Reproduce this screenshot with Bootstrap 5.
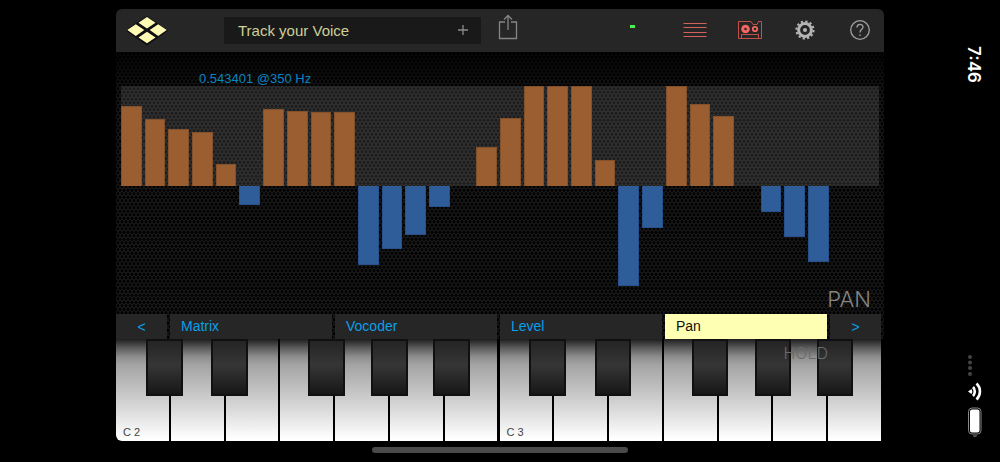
<!DOCTYPE html>
<html lang="en">
<head>
<meta charset="utf-8">
<meta name="viewport" content="width=device-width, initial-scale=1">
<title>Track your Voice</title>
<link href="https://cdn.jsdelivr.net/npm/bootstrap@5.3.0/dist/css/bootstrap.min.css" rel="stylesheet">
<style>
  body { background: #000; font-family: "Liberation Sans", Arial, sans-serif; font-size: 14px; }
  button { background: none; border: 0; padding: 0; }
  svg { display: block; }
  main { padding: 9px 0; }
  .side { flex: 0 0 116px; }

  .top-bar { background: #262626; height: 43px; padding: 0 12px 0 10px; border-radius: 6px 6px 0 0; }
  .preset { flex: 0 1 257px; height: 27px; margin-left: 55px; background: #191919; }
  .preset input { background: none; border: 0; outline: 0; width: 100%; min-width: 0; padding: 1px 0 0 14px; color: #cfcf98; font-size: 15px; }
  .preset button { padding: 0 12px; }
  .share { margin: 0 0 7px 17px; }
  .led { width: 5px; height: 3px; background: #4cf04c; margin: 0 48px 8px auto; }
  .tools { gap: 31px; margin-bottom: 2px; }
  .tools button { width: 24px; }
  .tools svg { margin: 0 auto; }

  .chart { height: 262px; padding: 16px 5px 0; }
  .readout { color: #0b84c4; font-size: 13px; line-height: 22px; height: 18px; padding-left: 78px; }
  .bars { display: grid; grid-template-columns: repeat(32, 1fr); height: 200px; background: linear-gradient(rgba(255,255,255,.11) 50%, transparent 50%); }
  .band { display: grid; grid-template-rows: 100px 100px; padding-right: 3px; }
  .band-up { align-self: end; background: #9a5e30; border: solid #82502a; border-width: 1px 1px 0; }
  .band-down { grid-row: 2; background: #2f5d99; border: solid #28508a; border-width: 0 1px 1px; }
  .page-name { color: #858585; font: 300 22px/26px Inter, sans-serif; padding-right: 8px; }

  .tabs { display: grid; grid-template-columns: 51px repeat(4, 1fr) 51px; gap: 3px; padding-right: 3px; }
  .tabs button { height: 25px; background: #262626; color: #0a9fe8; text-align: left; padding: 0 0 1px 11px; line-height: 24px; }
  .tabs .step { text-align: center; padding: 0; }
  .tabs .current { background: #ffffb3; color: #111; }

  .keys { margin-right: 1px; height: 102px; border-radius: 0 0 0 6px; overflow: hidden; }
  .octave { flex: 1 1 0; }
  .white-key { flex: 1 1 0; border-right: 2px solid #000; color: #444; font-size: 11px; text-align: left; padding: 0 0 1px 7px;
    background: linear-gradient(#1e1e1e 0, #5c5c5c 9px, #8e8e8e 18px, #a4a4a4 26px, #c6c6c6 54px, #e6e6e6 80px, #fff 100px); display: flex; align-items: flex-end; }
  .black-key { position: absolute; top: 0; width: 9.6%; height: 57px; border: 2px solid #101010; background: linear-gradient(#242424, #363636 45%, #171717); }
  .hold { position: absolute; right: 56px; top: 4px; color: #6a6a6a; font: 300 16px/20px Inter, sans-serif; }

  .home-bar { width: 33.4%; height: 6px; border-radius: 3px; background: #4a4a4a; margin: 6px auto 0; }
  .clock { writing-mode: vertical-rl; color: #fff; font: 600 17px/20px Inter, sans-serif; margin: 46px 16px 0 0; }
  .phone { margin: 0 17px 24px 0; }
</style>
</head>
<body>
<svg width="0" height="0" class="position-absolute" aria-hidden="true">
  <defs>
    <pattern id="hex" width="4" height="7" patternUnits="userSpaceOnUse">
      <rect width="4" height="7" fill="#1f1f1f"/>
      <ellipse cx="2" cy="1.75" rx="1.5" ry="1.7"/>
      <ellipse cx="0" cy="5.25" rx="1.5" ry="1.7"/>
      <ellipse cx="4" cy="5.25" rx="1.5" ry="1.7"/>
    </pattern>
    <linearGradient id="fade" x2="0" y2="1">
      <stop offset="0" stop-opacity=".8"/><stop offset=".15" stop-opacity=".1"/><stop offset="1" stop-opacity=".1"/>
    </linearGradient>
  </defs>
</svg>
<div class="d-flex min-vh-100">
  <div class="side"></div>

  <main class="flex-grow-1">
    <header class="top-bar d-flex align-items-center">
      <svg width="43" height="32" viewBox="0 0 43 32" role="img" aria-label="Home">
        <path fill="#101010" d="M21 1l11 7.500 10 7-10 7.500-11 7.500-11-7.500L0 15.500 10 8z"/>
        <path fill="#fffab4" d="M21 2l8.500 5.800-8.500 5.800-8.500-5.800zM9.800 9.300l8.500 5.800-8.500 5.800-8.500-5.800zM32.200 9.300l8.500 5.800-8.500 5.800-8.500-5.800zM21 16.700l8.500 5.800-8.500 5.800-8.500-5.800z"/>
      </svg>
      <div class="preset d-flex align-items-center">
        <input type="text" value="Track your Voice" aria-label="Preset name">
        <button type="button" aria-label="Add preset"><svg width="12" height="14" stroke="#8a8a8a" stroke-width="1.300"><path d="M6 1v10M1 6h10"/></svg></button>
      </div>
      <button type="button" class="share" aria-label="Share">
        <svg width="20" height="26" fill="none" stroke="#858585" stroke-width="1.300"><path d="M7 8H1.500v16.500h17V8H13M10 16V1.500M6 5.500l4-4 4 4"/></svg>
      </button>
      <span class="led"></span>
      <div class="tools d-flex align-items-center">
        <button type="button" aria-label="List"><svg width="24" height="16" stroke="#d4625c" stroke-width="1.200"><path d="M.5 1.500h23M.5 5.500h23M.5 10.500h23M.5 14.500h23"/></svg></button>
        <button type="button" aria-label="Recorder">
          <svg width="24" height="20" fill="none" stroke="#c4504a"><path d="M.5 1.500H13l2 3h4l1.500-3h3v17H.5zM3.500 18v-3.500h17V18"/><g stroke="#f36660"><circle cx="7.500" cy="9" r="2.800" stroke-width="3"/><circle cx="17" cy="9" r="2.200" stroke-width="1.800"/></g></svg>
        </button>
        <button type="button" aria-label="Settings">
          <svg width="20" height="20" viewBox="-10 -10 20 20" fill="none" stroke="#b4b4b4"><circle r="8.600" stroke-width="2" stroke-dasharray="2.250 2.253"/><circle r="6.400" stroke-width="3"/><circle r="2" fill="#b4b4b4" stroke="none"/></svg>
        </button>
        <button type="button" aria-label="Help">
          <svg width="22" height="22" viewBox="-11 -11 22 22" fill="none" stroke="#a0a0a0" stroke-width="1.300"><circle r="9.300"/><path d="M-3-2.500C-3-6.800 3.200-6.600 3-2.800 2.900-.8 0-.5 0 2.500M0 4.500V6"/></svg>
        </button>
      </div>
    </header>

    <div class="position-relative">
      <svg class="position-absolute top-0 start-0" width="100%" height="100%" aria-hidden="true"><rect width="100%" height="100%" fill="url(#hex)"/><rect width="100%" height="100%" fill="url(#fade)"/></svg>
      <section class="chart position-relative" aria-label="Pan per band">
        <div class="readout">0.543401 @350 Hz</div>
        <div class="bars" id="bars"></div>
        <div class="page-name text-end">PAN</div>
      </section>
      <nav class="tabs position-relative" aria-label="Pages">
        <button type="button" class="step">&lt;</button>
        <button type="button">Matrix</button>
        <button type="button">Vocoder</button>
        <button type="button">Level</button>
        <button type="button" class="current" aria-current="page">Pan</button>
        <button type="button" class="step">&gt;</button>
      </nav>
    </div>

    <div class="position-relative">
      <div class="keys d-flex" id="keys"></div>
      <div class="hold">HOLD</div>
    </div>
    <div class="home-bar"></div>
  </main>

  <aside class="side d-flex flex-column justify-content-between align-items-end">
    <time class="clock">7:46</time>
    <svg class="phone" width="16" height="84" viewBox="0 0 16 84" role="img" aria-label="Signal, Wi-Fi and battery">
      <g fill="#444"><circle cx="3" cy="3" r="2"/><circle cx="3" cy="8.500" r="2"/><circle cx="3" cy="14" r="2"/><circle cx="3" cy="20" r="2"/></g>
      <g fill="none" stroke="#fff" stroke-width="2.600"><path d="M6 33a6.500 6.500 0 0 1 0 9M9.500 29.500a11 11 0 0 1 0 16"/></g>
      <path fill="#fff" d="M1 37.500l3.500-2.500q1.500 2.500 0 5z"/>
      <rect x="1.500" y="54" width="12.500" height="26" rx="3.500" fill="none" stroke="#888"/>
      <rect x="3" y="55.500" width="9.500" height="23" rx="2" fill="#fff"/>
      <path fill="#888" d="M5.500 81.500h5q-2.500 2.500-5 0z"/>
    </svg>
  </aside>
</div>
<script src="https://cdn.jsdelivr.net/npm/bootstrap@5.3.0/dist/js/bootstrap.bundle.min.js"></script>
<script>
  // Pan of each band in percent: positive goes up, negative goes down
  const pan = [80, 67, 57, 54, 22, -19, 77, 75, 74, 74, -79, -63, -49, -21, 0, 39,
    68, 100, 100, 100, 26, -100, -42, 100, 82, 70, 0, -26, -51, -76, 0, 0];
  document.getElementById('bars').innerHTML = pan.map(v =>
    `<div class="band">${v ? `<div class="${v > 0 ? 'band-up' : 'band-down'}" style="height:${Math.abs(v)}%"></div>` : ''}</div>`).join('');

  const sharps = [7.8, 24.8, 50.1, 66.5, 82.7];
  document.getElementById('keys').innerHTML = [2, 3].map(n =>
    `<div class="octave d-flex position-relative">${[...'CDEFGAB'].map(k =>
      `<button type="button" class="white-key" aria-label="${k} ${n}">${k === 'C' ? 'C ' + n : ''}</button>`).join('')}${sharps.map(x =>
      `<button type="button" class="black-key" aria-label="Sharp key" style="left:${x}%"></button>`).join('')}</div>`).join('');
</script>
</body>
</html>
